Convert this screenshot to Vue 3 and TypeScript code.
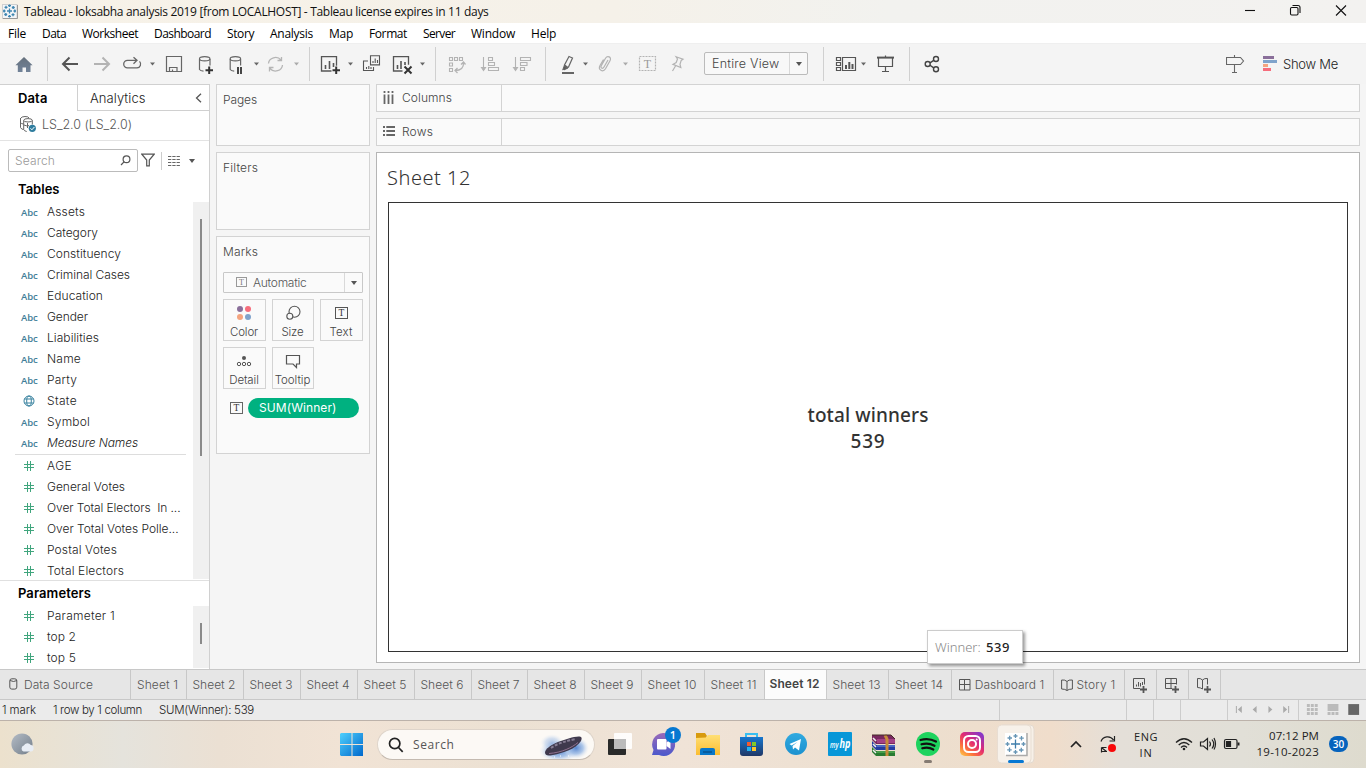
<script setup lang="ts">
interface Item { label: string; w: number }
interface Field extends Item { kind: 'abc' | 'geo' | 'num'; italic?: boolean }

// Spreads a label's letters so that it takes up the given width.
const vFit = {
  mounted(el: HTMLElement, binding: { value: number }) {
    const natural = el.getBoundingClientRect().width
    const count = (el.textContent ?? '').length
    if (count > 0) el.style.letterSpacing = `${(binding.value - natural) / count}px`
  },
}

const menus: Item[] = [
  { label: 'File', w: 18 }, { label: 'Data', w: 24 }, { label: 'Worksheet', w: 56 },
  { label: 'Dashboard', w: 57 }, { label: 'Story', w: 27 }, { label: 'Analysis', w: 43 },
  { label: 'Map', w: 24 }, { label: 'Format', w: 38 }, { label: 'Server', w: 32 },
  { label: 'Window', w: 44 }, { label: 'Help', w: 25 },
]

const dimensions: Field[] = [
  { label: 'Assets', w: 38, kind: 'abc' },
  { label: 'Category', w: 51, kind: 'abc' },
  { label: 'Constituency', w: 74, kind: 'abc' },
  { label: 'Criminal Cases', w: 83, kind: 'abc' },
  { label: 'Education', w: 56, kind: 'abc' },
  { label: 'Gender', w: 41, kind: 'abc' },
  { label: 'Liabilities', w: 52, kind: 'abc' },
  { label: 'Name', w: 34, kind: 'abc' },
  { label: 'Party', w: 30, kind: 'abc' },
  { label: 'State', w: 30, kind: 'geo' },
  { label: 'Symbol', w: 43, kind: 'abc' },
  { label: 'Measure Names', w: 91, kind: 'abc', italic: true },
]
const measures: Field[] = [
  { label: 'AGE', w: 25, kind: 'num' },
  { label: 'General Votes', w: 78, kind: 'num' },
  { label: 'Over Total Electors  In ...', w: 133.5, kind: 'num' },
  { label: 'Over Total Votes Polle...', w: 131.5, kind: 'num' },
  { label: 'Postal Votes', w: 70, kind: 'num' },
  { label: 'Total Electors', w: 77, kind: 'num' },
]
const parameters: Field[] = [
  { label: 'Parameter 1', w: 68, kind: 'num' },
  { label: 'top 2', w: 29, kind: 'num' },
  { label: 'top 5', w: 29, kind: 'num' },
]

const sheets = [
  { n: 1, cell: 56, w: 41 }, { n: 2, cell: 57, w: 43 }, { n: 3, cell: 57, w: 43 },
  { n: 4, cell: 57, w: 43 }, { n: 5, cell: 57, w: 43 }, { n: 6, cell: 57, w: 43 },
  { n: 7, cell: 56, w: 42 }, { n: 8, cell: 57, w: 43 }, { n: 9, cell: 57, w: 43 },
  { n: 10, cell: 63, w: 49 }, { n: 11, cell: 60, w: 46 }, { n: 12, cell: 62, w: 50 },
  { n: 13, cell: 62, w: 48 }, { n: 14, cell: 63, w: 48 },
]
const activeSheet = 12
const spokes = [0, 90, 180, 270]
</script>

<template>
  <div class="window">
    <header class="titlebar">
      <svg width="19" height="23" viewBox="0 0 19 23">
        <rect x="2.500" y="4.500" width="14.500" height="14" fill="#f4f6f8" stroke="#cfd0d0" />
        <path d="M3 18.500H17.500V5" fill="none" stroke="#999" />
        <g fill="none" stroke="#3f86b0" stroke-width="1.300">
          <path d="M9.500 8.500v5M7 11h5" />
          <g v-for="a in spokes" :key="a" :transform="`rotate(${a} 9.500 11)`">
            <path d="M9.500 4.500v2.500M8 5.700h3M13.200 6v3M11.800 7.500h3" />
          </g>
        </g>
      </svg>
      <span v-fit="464.500" class="title">Tableau - loksabha analysis 2019 [from LOCALHOST] - Tableau license expires in 11 days</span>
      <svg class="controls" width="126" height="23" viewBox="1240 0 126 23" fill="none" stroke="#111" stroke-width="1.100">
        <path d="M1245 10.500h10" />
        <rect x="1290.500" y="7.500" width="7.500" height="7.500" rx="1.200" />
        <path d="M1292.500 5.500h5.500q2 0 2 2v5.500" />
        <path d="M1336 5.500l10 10M1346 5.500l-10 10" />
      </svg>
    </header>

    <nav class="menubar">
      <span v-for="m in menus" :key="m.label" v-fit="m.w">{{ m.label }}</span>
    </nav>

    <div class="toolbar">
      <svg width="47" height="41" viewBox="0 43 47 41">
        <defs><linearGradient id="home" x1="0" y1="0" x2="0" y2="1"><stop offset="0" stop-color="#66717d" /><stop offset="1" stop-color="#718298" /></linearGradient></defs>
        <path d="M24 57L32.600 65.300H30.500V72H26V67.500H22.500V72H17.800V65.300H15.400Z" fill="url(#home)" />
      </svg>
      <i class="sep" />
      <svg width="261" height="41" viewBox="48 43 261 41" fill="none" stroke="#666">
        <path d="M78 64H63M69.500 57.500L63 64l6.500 6.500" stroke="#555" stroke-width="2" />
        <path d="M94 64h15M102.500 57.500L109 64l-6.500 6.500" stroke="#b3b3b3" stroke-width="2" />
        <path d="M137.500 60.300H127.500a3.800 3.800 0 0 0 0 7.600H137a3.800 3.800 0 0 0 2.500-6.500M133.500 57.200l3.500 3.100-3.500 3.500" stroke-width="1.300" />
        <path d="M150 62.500h5l-2.500 3z" fill="#666" stroke="none" />
        <path d="M166.500 56.500h15v15h-15zM169.500 71.500v-4h7.500v4M172.500 71.500v-2" stroke-width="1.200" />
        <ellipse cx="204.700" cy="58.800" rx="5.200" ry="2.100" stroke-width="1.200" />
        <path d="M199.500 59v10.500q1 1.500 4 1.700M210 59v6.500" stroke-width="1.200" />
        <path d="M205.500 70.300h7.500M209.200 66.500V74" stroke="#333" stroke-width="2" />
        <ellipse cx="235.400" cy="58.800" rx="5.200" ry="2.100" stroke-width="1.200" />
        <path d="M230.200 59v10.500q1 1.500 4 1.700M240.600 59v6.500" stroke-width="1.200" />
        <path d="M238 67v7M241 67v7" stroke="#333" stroke-width="1.800" />
        <path d="M254 62.500h5l-2.500 3z" fill="#666" stroke="none" />
        <g stroke="#b5b5b5" stroke-width="1.300"><path d="M268.500 63.500a7 6.500 0 0 1 12.500-3.500M282.500 65a7 6.500 0 0 1-12.500 3.500M277.500 60.500h4v-3.500M273.500 67.500h-4v4" /></g>
        <path d="M294 62.500h5l-2.500 3z" fill="#aaa" stroke="none" />
      </svg>
      <i class="sep" />
      <svg width="125" height="41" viewBox="310 43 125 41" fill="none" stroke="#555" stroke-width="1.300">
        <path d="M331.500 71h-10V56.700h15v9" />
        <path d="M325.500 69v-4M329.500 69v-8M333.500 67v-4" stroke-width="1.600" />
        <path d="M332.500 70.200h7.500M336.200 66.500V74" stroke="#333" stroke-width="2" />
        <path d="M348 62.500h5l-2.500 3z" fill="#666" stroke="none" />
        <path d="M370.500 55.700h9v9.200h-9zM368 61h-4.500v9.500h10v-3.500M373 63v-2M375.200 63v-4.500M377.500 63v-3M366.500 69v-2M368.800 69v-3M371 69v-2" stroke-width="1.100" />
        <path d="M402.500 71h-9V56.700h15v8" />
        <path d="M397.500 69v-4M401 69v-8M405 65v-3" stroke-width="1.600" />
        <path d="M404.500 66.500l7 7M411.500 66.500l-7 7" stroke="#333" stroke-width="2" />
        <path d="M420 62.500h5l-2.500 3z" fill="#666" stroke="none" />
      </svg>
      <i class="sep" />
      <svg width="109" height="41" viewBox="436 43 109 41" fill="none" stroke="#b3b3b3" stroke-width="1.100">
        <path d="M449.500 57.500h3v3h-3zM454.500 57.500h3v3h-3zM459.500 57.500h3v3h-3zM449.500 63h3v3h-3zM449.500 68.500h3v3h-3z" />
        <path d="M461 64.500l2.500-2.500 2 2.500M463.500 62.500q.5 8-8.500 8M457.500 68l-2.500 2.500 2.500 2.500" stroke-width="1.300" />
        <path d="M483.500 57v12.500M481.500 67.500l2 3 2-3z" fill="#b3b3b3" />
        <path d="M488.500 57.500h4v3h-4zM488.500 62.500h6v3h-6zM488.500 67.500h10v3h-10z" />
        <path d="M515.500 57v12.500M513.500 67.500l2 3 2-3z" fill="#b3b3b3" />
        <path d="M520.500 57.500h10v3h-10zM520.500 62.500h6.500v3h-6.500zM520.500 67.500h4v3h-4z" />
      </svg>
      <i class="sep" />
      <svg width="158" height="41" viewBox="546 43 158 41" fill="none" stroke="#666" stroke-width="1.200">
        <path d="M569 56.500l3.500 1.500-4 9-4 2.500v-4.500zM564.500 65l3.500 2.500" />
        <path d="M563 69.500l1.500-4 2.500 3z" fill="#555" />
        <path d="M562 73h12" stroke="#555" stroke-width="1.800" />
        <path d="M583 62.500h5l-2.500 3z" fill="#666" stroke="none" />
        <path d="M608 60l-4 7c-1.500 2.500-4 .8-2.700-1.300l4.200-7.500c2-3.300 6.500-1 4.500 2.500l-4.500 8c-2.500 4-7.800 1.300-5.500-3.200l3.500-6" stroke="#b3b3b3" />
        <path d="M623 62.500h5l-2.500 3z" fill="#aaa" stroke="none" />
        <rect x="639.500" y="56.500" width="16" height="14" stroke="#b3b3b3" stroke-dasharray="2 1" />
        <text x="647.500" y="68" class="glyph" font-size="12" fill="#999">T</text>
        <path d="M676 56.700l7 2.500-1.800 1.200-1.200 3.800.8 3.300-7.800-3.200 3.200-1.800 1.300-3.500zM675.500 66l-3 5" stroke="#b3b3b3" />
      </svg>
      <div class="viewselect">
        <span v-fit="67.500">Entire View</span><b class="drop"><i class="caret" /></b>
      </div>
      <i class="sep viewsep" />
      <svg width="85" height="41" viewBox="824 43 85 41" fill="none" stroke="#555" stroke-width="1.200">
        <path d="M836.500 57.500h4v3h-4zM836.500 62.500h4v3h-4zM836.500 67.500h4v3h-4zM842.500 57.500h13v13h-13z" />
        <path d="M846 69v-4M849.300 69v-7M852.500 69v-5" stroke-width="2" />
        <path d="M861 62.500h5l-2.500 3z" fill="#666" stroke="none" />
        <path d="M877 57.600h17" stroke-width="2" /><path d="M878.500 58v8.500h14V58M885.500 55.500v1.500M885.500 66.500v5M882 71.500h7" />
      </svg>
      <i class="sep" />
      <svg width="40" height="41" viewBox="910 43 40 41" fill="none" stroke="#444" stroke-width="1.400">
        <circle cx="927.700" cy="64" r="2.500" /><circle cx="936" cy="59" r="2.500" /><circle cx="936" cy="69.200" r="2.500" />
        <path d="M930 62.800l3.700-2.400M930 65.300l3.700 2.600" />
      </svg>
      <button class="showme">
        <svg width="57" height="41" viewBox="1226 43 57 41">
          <path d="M1226.500 57.500v7h14l3-3.500-3-3.500h-14zM1234.500 55v2.500M1234.500 64.500v7.500M1232 72.500h5" fill="none" stroke="#666" stroke-width="1.100" />
          <path d="M1263 56h11v3h-11z" fill="#8a6f9a" /><path d="M1263 60h14v3h-14z" fill="#7fa3cb" /><path d="M1263 64h5v3h-5z" fill="#f4a47f" /><path d="M1263 68h8v3h-8z" fill="#f66d7c" />
        </svg>
        <span v-fit="55">Show Me</span>
      </button>
    </div>

    <main class="workspace">
      <aside class="side">
        <div class="sidetabs">
          <div class="sidetab on"><span v-fit="29.500">Data</span></div>
          <div class="sidetab"><span v-fit="55.500">Analytics</span>
            <svg width="7" height="10" viewBox="0 0 7 10"><path d="M6 .7L1.500 5 6 9.300" fill="none" stroke="#555" stroke-width="1.300" /></svg>
          </div>
        </div>
        <div class="source">
          <svg width="18" height="18" viewBox="19 117 18 18" fill="none" stroke="#666" stroke-width="1">
            <path d="M20.500 119v9.500q1 2 3 2M20.500 119.500q1-2 4.500-2t4 1.500" /><ellipse cx="28" cy="121.300" rx="4.300" ry="1.700" />
            <path d="M23.700 121.500v9q.5 1.500 3 2M32.300 121.500v4M20.500 123.500q1 1.500 3 1.500M24 126q2 1.200 5 .7M27.500 124v5" />
            <circle cx="32.300" cy="129.300" r="3.600" fill="#2f7d9f" stroke="none" /><path d="M30.500 129.300l1.400 1.500 2.500-2.800" stroke="#fff" />
          </svg>
          <span v-fit="90">LS_2.0 (LS_2.0)</span>
        </div>
        <div class="searchrow">
          <div class="search"><span v-fit="40">Search</span>
            <svg width="11" height="11" viewBox="0 0 11 11" fill="none" stroke="#555" stroke-width="1.200"><circle cx="6.500" cy="4.300" r="3.400" /><path d="M4 6.800L1 10" /></svg>
          </div>
          <svg class="funnel" width="14" height="14" viewBox="0 0 14 14"><path d="M.8 1.200h12.400L8.300 7v5.800H5.700V7z" fill="none" stroke="#555" stroke-width="1.200" /></svg>
          <i class="vline" />
          <svg width="12" height="10" viewBox="0 0 12 10"><path d="M0 .5h12M0 3.500h12M0 6.500h12M0 9.500h12" stroke="#666" stroke-dasharray="3.300 1" /></svg>
          <i class="caret wide" />
        </div>
        <h3><span v-fit="41.500">Tables</span></h3>
        <div class="fields tables">
          <template v-for="(f, i) in [...dimensions, ...measures]" :key="f.label">
            <hr v-if="i === dimensions.length">
            <div class="field">
              <span v-if="f.kind === 'abc'" v-fit="16.500" class="abc">Abc</span>
              <svg v-else-if="f.kind === 'geo'" width="12" height="12" viewBox="0 0 12 12" fill="none" stroke="#3a83a0"><circle cx="6" cy="6" r="5" /><ellipse cx="6" cy="6" rx="2.300" ry="5" /><path d="M1.500 4h9M1.500 8h9" /></svg>
              <svg v-else width="10" height="10" viewBox="0 0 10 10"><path d="M3.500 0v10M6.500 0v10M0 3.500h10M0 6.500h10" stroke="#40a57d" /></svg>
              <span v-fit="f.w" class="name" :class="{ italic: f.italic }">{{ f.label }}</span>
            </div>
          </template>
          <div class="track"><i class="thumb long" /></div>
        </div>
        <h3 class="paramhead"><span v-fit="73">Parameters</span></h3>
        <div class="fields params">
          <div v-for="f in parameters" :key="f.label" class="field">
            <svg width="10" height="10" viewBox="0 0 10 10"><path d="M3.500 0v10M6.500 0v10M0 3.500h10M0 6.500h10" stroke="#40a57d" /></svg>
            <span v-fit="f.w" class="name">{{ f.label }}</span>
          </div>
          <div class="track"><i class="thumb short" /></div>
        </div>
      </aside>

      <section class="cards">
        <div class="card pages"><span v-fit="34">Pages</span></div>
        <div class="card filters"><span v-fit="35">Filters</span></div>
        <div class="card marks">
          <span v-fit="35">Marks</span>
          <div class="marktype">
            <svg width="12" height="11" viewBox="0 0 12 11"><rect x=".5" y=".5" width="10" height="9" fill="none" stroke="#999" /><text x="5.500" y="8" class="glyph" font-size="8" fill="#777">T</text></svg>
            <span v-fit="53.500">Automatic</span><b class="drop"><i class="caret" /></b>
          </div>
          <div class="markgrid">
            <button><svg width="16" height="16" viewBox="0 0 16 16"><circle cx="4" cy="4" r="3" fill="#8a6f9a" /><circle cx="12" cy="4" r="3" fill="#f66d7c" /><circle cx="4" cy="12" r="3" fill="#f4a47f" /><circle cx="12" cy="12" r="3" fill="#7fa3cb" /></svg><span v-fit="28">Color</span></button>
            <button><svg width="16" height="16" viewBox="0 0 16 16" fill="none" stroke="#555" stroke-width="1.100"><circle cx="9.500" cy="6.800" r="5.500" /><circle cx="4.800" cy="11.300" r="3" fill="#fafafa" /></svg><span v-fit="22">Size</span></button>
            <button><svg width="16" height="16" viewBox="0 0 16 16"><rect x="2.500" y="2.500" width="12" height="11" fill="none" stroke="#555" /><text x="8.500" y="11.200" class="glyph" font-size="9.500" fill="#333">T</text></svg><span v-fit="23">Text</span></button>
            <button><svg width="16" height="16" viewBox="0 0 16 16" fill="none" stroke="#555"><circle cx="8" cy="5" r="2" fill="#555" stroke="none" /><circle cx="3" cy="11" r="1.700" /><circle cx="8" cy="11" r="1.700" /><circle cx="13" cy="11" r="1.700" /></svg><span v-fit="29.500">Detail</span></button>
            <button><svg width="16" height="16" viewBox="0 0 16 16"><path d="M1.500 2.500h13v8.500h-3v3.500L8 11H1.500z" fill="none" stroke="#555" stroke-width="1.200" /></svg><span v-fit="35.500">Tooltip</span></button>
          </div>
          <div class="encoding">
            <svg width="14" height="13" viewBox="0 0 14 13"><rect x=".5" y=".5" width="12" height="11" fill="none" stroke="#666" /><text x="6.500" y="9.200" class="glyph" font-size="9.500" fill="#333">T</text></svg>
            <div class="pill"><span v-fit="77.500">SUM(Winner)</span></div>
          </div>
        </div>
      </section>

      <section class="canvas">
        <div class="shelf"><div class="shelfname">
          <svg width="12" height="13" viewBox="0 0 12 13"><path d="M1.500 0v2M5.500 0v2M9.500 0v2M1.500 3.500V13M5.500 3.500V13M9.500 3.500V13" stroke="#666" stroke-width="1.800" /></svg>
          <span v-fit="50">Columns</span></div></div>
        <div class="shelf"><div class="shelfname rows">
          <svg width="12" height="11" viewBox="0 0 12 11"><path d="M0 1h2M0 5h2M0 9h2M3.300 1H12M3.300 5H12M3.300 9H12" stroke="#666" stroke-width="2" /></svg>
          <span v-fit="31">Rows</span></div></div>
        <div class="view">
          <h1><span v-fit="84">Sheet 12</span></h1>
          <div class="plot">
            <div class="mark"><span v-fit="121">total winners</span><span v-fit="35">539</span></div>
          </div>
          <div class="tip"><span v-fit="49">Winner: </span><span v-fit="24" class="val">539</span></div>
        </div>
      </section>
    </main>

    <div class="tabs">
      <div class="datasource">
        <svg width="9" height="12" viewBox="0 0 9 12" fill="none" stroke="#555"><rect x=".8" y=".8" width="7" height="10.300" rx="2" /><path d="M1 2.500q3.500 2 7 0" /></svg>
        <span v-fit="69">Data Source</span>
      </div>
      <div v-for="s in sheets" :key="s.n" class="tab" :class="{ active: s.n === activeSheet }" :style="{ width: s.cell + 'px' }">
        <span v-fit="s.w">{{ 'Sheet ' + s.n }}</span>
      </div>
      <div class="tab dash">
        <svg width="12" height="12" viewBox="0 0 12 12" fill="none" stroke="#555"><path d="M.5.5h10.500V11H.5zM5.500.5V11M.5 5.500H11" /></svg>
        <span v-fit="69.500">Dashboard 1</span>
      </div>
      <div class="tab story">
        <svg width="12" height="12" viewBox="0 0 12 12" fill="none" stroke="#555"><path d="M.6 1q3.500-.5 5.400 1.500Q7.500.5 11.400 1v9q-3.500 0-5.400 1.500Q4 10 .6 10zM6 2.500v9" /></svg>
        <span v-fit="39">Story 1</span>
      </div>
      <div class="tab new"><svg width="17" height="16" viewBox="0 0 17 16" fill="none" stroke="#555"><path d="M8 11.500H1.500v-10h11v6M4.500 9.500v-2M6.500 9.500V5M8.500 9.500V6M10.500 8V5" /><path d="M8 12.500h7M11.500 9v7" stroke-width="1.800" /></svg></div>
      <div class="tab new"><svg width="17" height="16" viewBox="0 0 17 16" fill="none" stroke="#555"><path d="M8 11.500H1.500v-10h11v6M7 1.500v10M1.500 6.500h11" /><path d="M8 12.500h7M11.500 9v7" stroke-width="1.800" /></svg></div>
      <div class="tab new"><svg width="17" height="16" viewBox="0 0 17 16" fill="none" stroke="#555"><path d="M1.500 1.500q3-.5 5 1.500 2-2 5-1.500v6M1.500 1.500v9q3 0 5 1.500V3" /><path d="M8 12.500h7M11.500 9v7" stroke-width="1.800" /></svg></div>
    </div>

    <footer class="status">
      <div class="stats"><span v-fit="34">1 mark</span><span v-fit="89">1 row by 1 column</span><span v-fit="95">SUM(Winner): 539</span></div>
      <i class="cell c1" /><i class="cell c2" /><i class="cell c2" /><i class="cell c3" />
      <svg class="cell pager" width="71" height="20" viewBox="1227 700 71 20" fill="#aaa"><path d="M1235 706h1v7h-1zM1241 706v7l-4-3.500zM1256 706v7l-4-3.500zM1268 706v7l4-3.500zM1283 706v7l4-3.500zM1288 706h1v7h-1z" /></svg>
      <svg class="cell modes" width="68" height="20" viewBox="1298 700 68 20" fill="#bbb">
        <path d="M1306 704h3v3h-3zM1310 704h3v3h-3zM1314 704h3v3h-3zM1306 708h3v3h-3zM1310 708h3v3h-3zM1314 708h3v3h-3zM1306 712h3v3h-3zM1310 712h3v3h-3zM1314 712h3v3h-3zM1327 704h11v7h-11zM1327 712h3v3h-3zM1331 712h3v3h-3zM1335 712h3v3h-3z" />
        <path d="M1348 704h11v11h-11z" fill="#666" />
      </svg>
    </footer>

    <div class="taskbar">
      <svg width="340" height="47" viewBox="0 721 340 47">
        <defs><linearGradient id="moon" x1="0" y1="0" x2="1" y2="1"><stop offset="0" stop-color="#b4bcc6" /><stop offset="1" stop-color="#727d89" /></linearGradient></defs>
        <circle cx="22" cy="744" r="10.600" fill="url(#moon)" /><path d="M23.500 751.500a3.200 3.200 0 0 1 .3-6 4 4 0 0 1 7-.5 3.300 3.300 0 0 1 .2 6.500z" fill="#e8edf5" />
      </svg>
      <svg width="37" height="47" viewBox="340 721 37 47">
        <defs><linearGradient id="win" x1="0" y1="0" x2="1" y2="1"><stop offset="0" stop-color="#4fd0fd" /><stop offset="1" stop-color="#0068cc" /></linearGradient></defs>
        <path d="M341 733h10.500v11H340v-10zM352.500 733H363v11h-10.500zM340 745h11.500v11H341l-1-1zM352.500 745H363v11h-10.500z" fill="url(#win)" />
      </svg>
      <div class="wsearch">
        <svg width="16" height="16" viewBox="0 0 16 16" fill="none" stroke="#222" stroke-width="1.700"><circle cx="6.700" cy="6.500" r="5.200" /><path d="M10.500 10.500l4.200 4.300" /></svg>
        <span v-fit="41.500">Search</span>
        <svg class="space" width="50" height="28" viewBox="0 0 50 28">
          <defs><radialGradient id="neb"><stop offset="0" stop-color="#5786cf" /><stop offset=".55" stop-color="#9cbbe6" stop-opacity=".8" /><stop offset="1" stop-color="#dfe8f5" stop-opacity="0" /></radialGradient></defs>
          <ellipse cx="20" cy="20" rx="20" ry="11" fill="url(#neb)" /><ellipse cx="37" cy="17" rx="13" ry="11" fill="url(#neb)" /><ellipse cx="13" cy="12" rx="12" ry="9" fill="url(#neb)" opacity=".5" />
          <path d="M6 21c2-7 17-12 29-15 6-1 9-1 7 4-5 8-18 12-28 14-5 1-8 1-8-3z" fill="#3f394d" /><path d="M12 17c7-5 15-7 25-9" stroke="#857c92" stroke-width="2" fill="none" stroke-dasharray="3 1.500" /><path d="M10 22.500c13-1 23-6 29-11" stroke="#a57f9f" fill="none" stroke-width=".8" /><path d="M15 26h1M29 25h1M21 25h1" stroke="#fff" />
        </svg>
      </div>
      <svg width="402" height="47" viewBox="595 721 402 47">
        <defs>
          <linearGradient id="chat" x1="0" y1="0" x2="0" y2="1"><stop offset="0" stop-color="#9a6ab9" /><stop offset="1" stop-color="#4a58cc" /></linearGradient>
          <linearGradient id="folder" x1="0" y1="0" x2="0" y2="1"><stop offset="0" stop-color="#ffdf75" /><stop offset="1" stop-color="#fbbd31" /></linearGradient>
          <linearGradient id="store" x1="0" y1="0" x2="0" y2="1"><stop offset="0" stop-color="#1777cf" /><stop offset="1" stop-color="#203765" /></linearGradient>
          <linearGradient id="insta" x1="0" y1="1" x2=".8" y2="0"><stop offset="0" stop-color="#ffcf48" /><stop offset=".3" stop-color="#fc733d" /><stop offset=".6" stop-color="#e32b72" /><stop offset="1" stop-color="#8637c9" /></linearGradient>
          <linearGradient id="tg" x1="0" y1="0" x2="0" y2="1"><stop offset="0" stop-color="#31aae0" /><stop offset="1" stop-color="#1c91cf" /></linearGradient>
        </defs>
        <rect x="608" y="739" width="18" height="16" rx="1" fill="#292a2a" /><rect x="614" y="733" width="18" height="16" rx="1" fill="#fff" opacity=".9" /><path d="M614 739h12v10h-12z" fill="#bbb" />
        <path d="M663 733a11.500 11.500 0 1 1-4 22h-7l1.500-5A11.500 11.500 0 0 1 663 733z" fill="url(#chat)" /><rect x="657" y="739" width="9.500" height="10.500" rx="1" fill="#fff" /><path d="M666.500 742.500l4-3v9.500l-4-3z" fill="#fff" />
        <circle cx="673" cy="735" r="8" fill="#0778d1" /><text x="673" y="739" class="num" font-size="11">1</text>
        <path d="M696 733h9l2 3-2 3h-9z" fill="#d89a0e" /><path d="M696 738l10-.5 2-2.500h12v20h-24z" fill="url(#folder)" /><path d="M700 755v-5q0-2 2-2h11q2 0 2 2v5z" fill="#0877c9" /><path d="M703 752h9" stroke="#075390" stroke-width="1.500" />
        <path d="M746 738v-4h11v4" fill="none" stroke="#39bff1" stroke-width="2" /><path d="M740 737h23v16q0 3-3 3h-17q-3 0-3-3z" fill="url(#store)" />
        <path d="M747 742h4v4h-4z" fill="#f35b2e" /><path d="M752 742h4v4h-4z" fill="#82c928" /><path d="M747 747h4v4h-4z" fill="#21b2f2" /><path d="M752 747h4v4h-4z" fill="#ffc72a" />
        <circle cx="796" cy="744" r="11" fill="url(#tg)" /><path d="M789.500 744l11.500-5-2 11.500-4-3-2 2-.5-3.500 5-4-6 3.500z" fill="#fff" />
        <rect x="828" y="732" width="24" height="24" rx="1" fill="#0797d8" />
        <text x="830" y="747.500" class="hp" font-size="8.500" textLength="8.500" lengthAdjust="spacingAndGlyphs">my</text>
        <text x="839.500" y="747.500" class="hp bold" font-size="12" textLength="11" lengthAdjust="spacingAndGlyphs">hp</text>
        <path d="M872 735h19l4 4v5h-19l-4-4z" fill="#78285f" /><path d="M872 741l4 4h19v5h-19l-4-4z" fill="#263ca2" /><path d="M872 747l4 4h19v5h-19l-4-4z" fill="#287b32" /><path d="M877 740h18M877 742h18" stroke="#d05aab" /><path d="M877 746h18" stroke="#6c93e5" /><path d="M877 752h18" stroke="#66c063" /><path d="M873 738l3 3M873 744l3 3M873 750l3 3" stroke="#eee" stroke-width="1.500" /><path d="M885 735l2 4v17" fill="none" stroke="#c78b3a" stroke-width="3" /><path d="M872 735h19l4 4" fill="none" stroke="#462c29" />
        <circle cx="928" cy="744" r="12" fill="#1ed35e" /><path d="M920.500 740q8-2.500 15.500 1.500M921.500 744.300q7-2 13 1.500M922.300 748.300q6-1.700 11 1.200" fill="none" stroke="#111" stroke-width="2.200" stroke-linecap="round" /><path d="M925.500 761.500h5" stroke="#857b73" stroke-width="3" stroke-linecap="round" />
        <rect x="960" y="732" width="24" height="24" rx="5" fill="url(#insta)" /><rect x="964" y="736" width="16" height="16" rx="4.500" fill="none" stroke="#fff" stroke-width="2" /><circle cx="972" cy="744" r="4" fill="none" stroke="#fff" stroke-width="2" /><circle cx="976.700" cy="739.500" r="1" fill="#fff" />
      </svg>
      <svg width="63" height="47" viewBox="997 721 63 47">
        <rect x="999" y="725" width="35" height="38" rx="4" fill="#f7f0e8" stroke="#e4dacf" /><rect x="997.500" y="725" width="33.500" height="38" rx="4" fill="#f7f1ea" stroke="#e8ddd2" />
        <path d="M1005 733h21v22h-21z" fill="#fff" /><path d="M1006 755.500h21V733" fill="none" stroke="#aaa" stroke-width="1.500" />
        <g fill="none" stroke="#6695b5" stroke-width="1.300"><path d="M1015.500 739.500v9M1011 744h9" stroke="#3e7eac" />
          <g v-for="a in spokes" :key="a" :transform="`rotate(${a} 1015.500 744)`"><path d="M1015.500 734v4M1013.500 736h4M1021.500 736v4.500M1019.300 738.200h4.500" /></g></g>
        <path d="M1009.500 761.500h13" stroke="#0878d3" stroke-width="3" stroke-linecap="round" />
      </svg>
      <svg width="68" height="47" viewBox="1060 721 68 47" fill="none" stroke="#222" stroke-width="1.400">
        <path d="M1071 747l5-5 5 5" stroke-width="1.700" /><path d="M1101 741.500a7 7 0 0 1 12.500-1.500M1114.500 736v5h-5M1107 751.500h-5M1101.500 747.500h5M1101.500 747.500v5M1102 748l4.500 3.500" stroke-width="1.200" /><circle cx="1112" cy="748" r="4" fill="#f80808" stroke="none" />
      </svg>
      <div class="lang"><span v-fit="24">ENG</span><span v-fit="13">IN</span></div>
      <svg width="78" height="47" viewBox="1168 721 78 47" fill="none" stroke="#222" stroke-width="1.200">
        <path d="M1176 742.500q8-7.500 16 0M1178.700 745q5.300-5 10.600 0M1181 747.500q3-3 6 0" stroke-width="1.300" /><circle cx="1184" cy="749" r="1.300" fill="#222" stroke="none" />
        <path d="M1200.500 742h3l4-3.500v11l-4-3.500h-3zM1209.500 741.500q2 2.500 0 5M1212 739.500q3.500 4.500 0 9M1214 738q3 6 0 11.500" />
        <rect x="1224.500" y="739.500" width="12.500" height="9" rx="1.500" /><path d="M1226.500 741.500h4v5h-4z" fill="#222" /><path d="M1238.500 742.500v3" stroke-width="2" />
      </svg>
      <div class="clock"><span v-fit="50">07:12 PM</span><span v-fit="62.500">19-10-2023</span></div>
      <b class="badge">30</b>
    </div>
  </div>
</template>

<style>
body { margin: 0; overflow: hidden; }
</style>
<style scoped>
* { box-sizing: border-box; }
.window { width: 1366px; height: 768px; display: flex; flex-direction: column; background: #f5f5f5; font: 350 12px/16px Inter, "Open Sans", sans-serif; color: #222; overflow: hidden; }
span { display: inline-block; flex: none; white-space: pre; }
svg { display: block; flex: none; }
i, hr { display: block; flex: none; }
button { border: 0; background: none; padding: 0; font: inherit; color: inherit; }
.glyph { font-family: "Liberation Serif", serif; font-weight: 400; text-anchor: middle; stroke: none; }
.titlebar { height: 23px; flex: none; display: flex; align-items: center; background: linear-gradient(90deg, #f7f2e8, #f5f1e9 45%, #f2f2ef 65%, #f3f2f0); font-family: "Open Sans", sans-serif; font-weight: 400; color: #111; }
.title { margin: 1px 0 0 5px; font-size: 12px; }
.controls { margin-left: auto; }
.menubar { height: 20px; flex: none; display: flex; align-items: center; gap: 16px; padding: 2px 8px 0; background: #fff; font-family: "Open Sans", sans-serif; font-weight: 400; color: #000; }
.toolbar { height: 41px; flex: none; display: flex; align-items: center; background: #f4f4f4; border-top: 1px solid #efefef; }
.toolbar > svg, .showme svg { margin-top: -1px; }
.sep { width: 1px; height: 34px; background: #d0d0d0; }
.viewselect { width: 104px; height: 23px; display: flex; align-items: center; margin-top: -1px; padding-left: 7px; border: 1px solid #bbb; border-radius: 2px; background: #f8f8f8; font-size: 12.500px; color: #444; }
.drop { width: 18px; height: 100%; margin-left: auto; display: flex; align-items: center; justify-content: center; border-left: 1px solid #d9d9d9; }
.caret { border: solid transparent; border-width: 4px 3.500px 0; border-top-color: #555; }
.viewsep { margin-left: 15px; }
.showme { margin-left: auto; margin-right: 28px; display: flex; align-items: center; font-size: 13px; }
.workspace { height: 585px; flex: none; display: flex; }
.side { width: 210px; height: 585px; flex: none; display: flex; flex-direction: column; background: #fff; border: solid #d0d0d0; border-width: 1px 1px 0 0; }
.sidetabs { display: flex; height: 26px; flex: none; }
.sidetab { flex: 1; display: flex; align-items: center; justify-content: space-between; padding: 0 7px 0 12px; border: solid #d0d0d0; border-width: 0 0 1px 1px; font-size: 13px; }
.sidetab.on { flex: 0 0 77px; padding: 0 0 0 18px; border: 0; font-weight: 600; color: #000; }
.source { height: 30px; flex: none; display: flex; align-items: center; gap: 5px; padding: 0 0 2px 19px; border-bottom: 1px solid #e3e3e3; color: #555; font-size: 12.500px; }
.searchrow { height: 39px; flex: none; display: flex; align-items: center; padding-left: 8px; }
.search { width: 130px; height: 23px; display: flex; align-items: center; justify-content: space-between; padding: 0 6px; border: 1px solid #bbb; border-radius: 2px; color: #999; }
.funnel { margin: -1px 0 0 3px; }
.vline { width: 1px; height: 18px; margin: 0 6px; background: #ccc; }
.caret.wide { margin-left: 9px; }
h3 { height: 21px; flex: none; display: flex; align-items: center; margin: 0; padding: 0 18px 4px; font-size: 13px; font-weight: 600; color: #000; }
.fields { position: relative; flex: none; overflow: hidden; }
.tables { height: 379px; }
.field { height: 21px; display: grid; grid-template-columns: 28px 1fr; justify-items: start; align-items: center; padding-left: 19px; }
.field > svg { justify-self: center; margin-right: 9px; }
.abc { margin-left: 2px; font: 600 9.500px/12px "Open Sans", sans-serif; color: #3f7e98; padding-top: 2px; }
.name.italic { font-style: italic; }
.fields hr { height: 1px; margin: 1px 23px 0 15px; border: 0; background: #ddd; }
.track { position: absolute; top: 1px; right: 0; bottom: 1px; width: 16px; background: #f0f0f0; }
.thumb { width: 2px; margin-left: 7px; background: #8a8a8a; }
.long { margin-top: 17px; height: 237px; }
.short { margin-top: 17px; height: 21px; }
.paramhead { height: 25px; border-top: 1px solid #e0e0e0; padding-bottom: 1px; }
.params { height: 64px; }
.cards { width: 154px; margin-left: 6px; flex: none; display: flex; flex-direction: column; gap: 6px; }
.card { padding: 7px 6px; border: 1px solid #d3d3d3; background: #fafafa; color: #444; }
.pages { height: 62px; }
.filters { height: 78px; }
.marks { height: 218px; }
.marktype { height: 21px; margin-top: 12px; display: flex; align-items: center; gap: 6px; padding-left: 12px; border: 1px solid #c8c8c8; border-radius: 1px; color: #555; }
.marktype svg { margin-right: -1px; }
.markgrid { display: grid; grid-template-columns: 43px 42px 43px; grid-auto-rows: 42px; gap: 6px; margin-top: 6px; }
.markgrid button { display: flex; flex-direction: column; align-items: center; justify-content: space-between; padding: 5px 1px 0 0; border: 1px solid #d3d3d3; font-size: 11.500px; }
.encoding { display: flex; align-items: center; gap: 4px; margin: 9px 0 0 7px; }
.pill { width: 111px; height: 20px; padding: 2px 11px; border-radius: 10px; background: #00b180; color: #fff; font-weight: 400; }
.canvas { width: 984px; margin-left: 6px; display: flex; flex-direction: column; gap: 6px; }
.shelf { height: 28px; flex: none; border: 1px solid #d3d3d3; background: #fafafa; }
.shelfname { width: 125px; height: 26px; display: flex; align-items: center; gap: 7px; padding-left: 6px; border-right: 1px solid #d3d3d3; font-size: 12px; color: #444; }
.shelfname svg { margin-top: -1px; }
.view { position: relative; height: 511px; padding: 0 11px; border: 1px solid #b5b5b5; background: #fff; display: flex; flex-direction: column; }
h1 { height: 49px; margin: 0 0 0 -1px; display: flex; align-items: center; font: 300 20px/28px "Noto Sans", "Open Sans", sans-serif; color: #333; }
.plot { width: 960px; height: 450px; border: 1px solid #333; display: flex; align-items: center; justify-content: center; }
.mark { display: flex; flex-direction: column; align-items: center; font: 500 19px/26px "Noto Sans", "Open Sans", sans-serif; color: #333; margin-top: 1px; }
.tip { position: absolute; left: 550px; top: 477px; width: 96px; height: 34px; display: flex; align-items: center; padding-left: 7px; gap: 2px; border: 1px solid #ccc; background: #fff; box-shadow: 2px 2px 3px #0006; color: #888; font: 300 13px/16px "Noto Sans", "Open Sans", sans-serif; }
.val { color: #222; font-weight: 500; }
.tabs { height: 31px; flex: none; display: flex; border: solid #c8c8c8; border-width: 1px 0; background: #e6e6e6; color: #555; }
.datasource { width: 131px; display: flex; align-items: center; gap: 5px; padding-left: 10px; border-right: 1px solid #c8c8c8; }
.datasource svg { margin-left: -1px; margin-right: 1px; margin-top: -2px; }
.tab { flex: none; display: flex; align-items: center; justify-content: center; padding-right: 2px; border-right: 1px solid #c8c8c8; }
.active { background: #fcfcfc; color: #444; font-weight: 600; padding-bottom: 2px; }
.active.tab { border-color: #ccc; }
.dash { width: 102px; gap: 4px; }
.story { width: 71px; gap: 4px; }
.new { width: 32px; padding-right: 0; }
.status { height: 20px; flex: none; display: flex; background: #ebebeb; color: #222; font-size: 11.500px; }
.stats { width: 999px; display: flex; align-items: center; gap: 17px; padding-left: 2px; }
.cell { border-left: 1px solid #ccc; }
.c1 { width: 127px; }
.c2 { width: 27px; }
.c3 { width: 47px; }
.pager { width: 71px; }
.modes { width: 68px; }
.taskbar { height: 48px; flex: none; display: flex; border-top: 1px solid #bcb2aa; background: linear-gradient(90deg, #ece1cd 0, #e5e3dc 9%, #ebe0d3 16%, #f1e3d5 25%, #ece1d3 37%, #f0e3d7 50%, #ecdfcf 66%, #f0ddcb 77%, #e4dfd8 82%, #e1dfd7 91%, #dedbce); font-family: "Open Sans", sans-serif; font-weight: 400; color: #222; }
.wsearch { width: 218px; height: 31px; margin-top: 8px; padding-left: 10px; display: flex; align-items: center; gap: 9px; border: 1px solid #ded4ca; border-bottom-color: #c4bab0; border-radius: 16px; background: #fcf9f5; color: #555; font-size: 12px; overflow: hidden; }
.space { margin-left: auto; margin-right: 5px; }
.num { fill: #fff; text-anchor: middle; font-weight: 600; }
.hp { fill: #fff; font-weight: 600; font-style: italic; }
.hp.bold { font-weight: 700; }
.lang { width: 36px; padding-top: 8px; margin-right: 4px; display: flex; flex-direction: column; align-items: center; font-size: 11px; }
.clock { width: 73px; padding-top: 7px; display: flex; flex-direction: column; align-items: flex-end; font-size: 11.500px; }
.badge { width: 19px; height: 16px; margin: 15px 0 0 10px; border-radius: 8px; background: #0663bd; color: #fff; font-size: 10px; font-weight: 600; line-height: 16px; text-align: center; }
</style>
